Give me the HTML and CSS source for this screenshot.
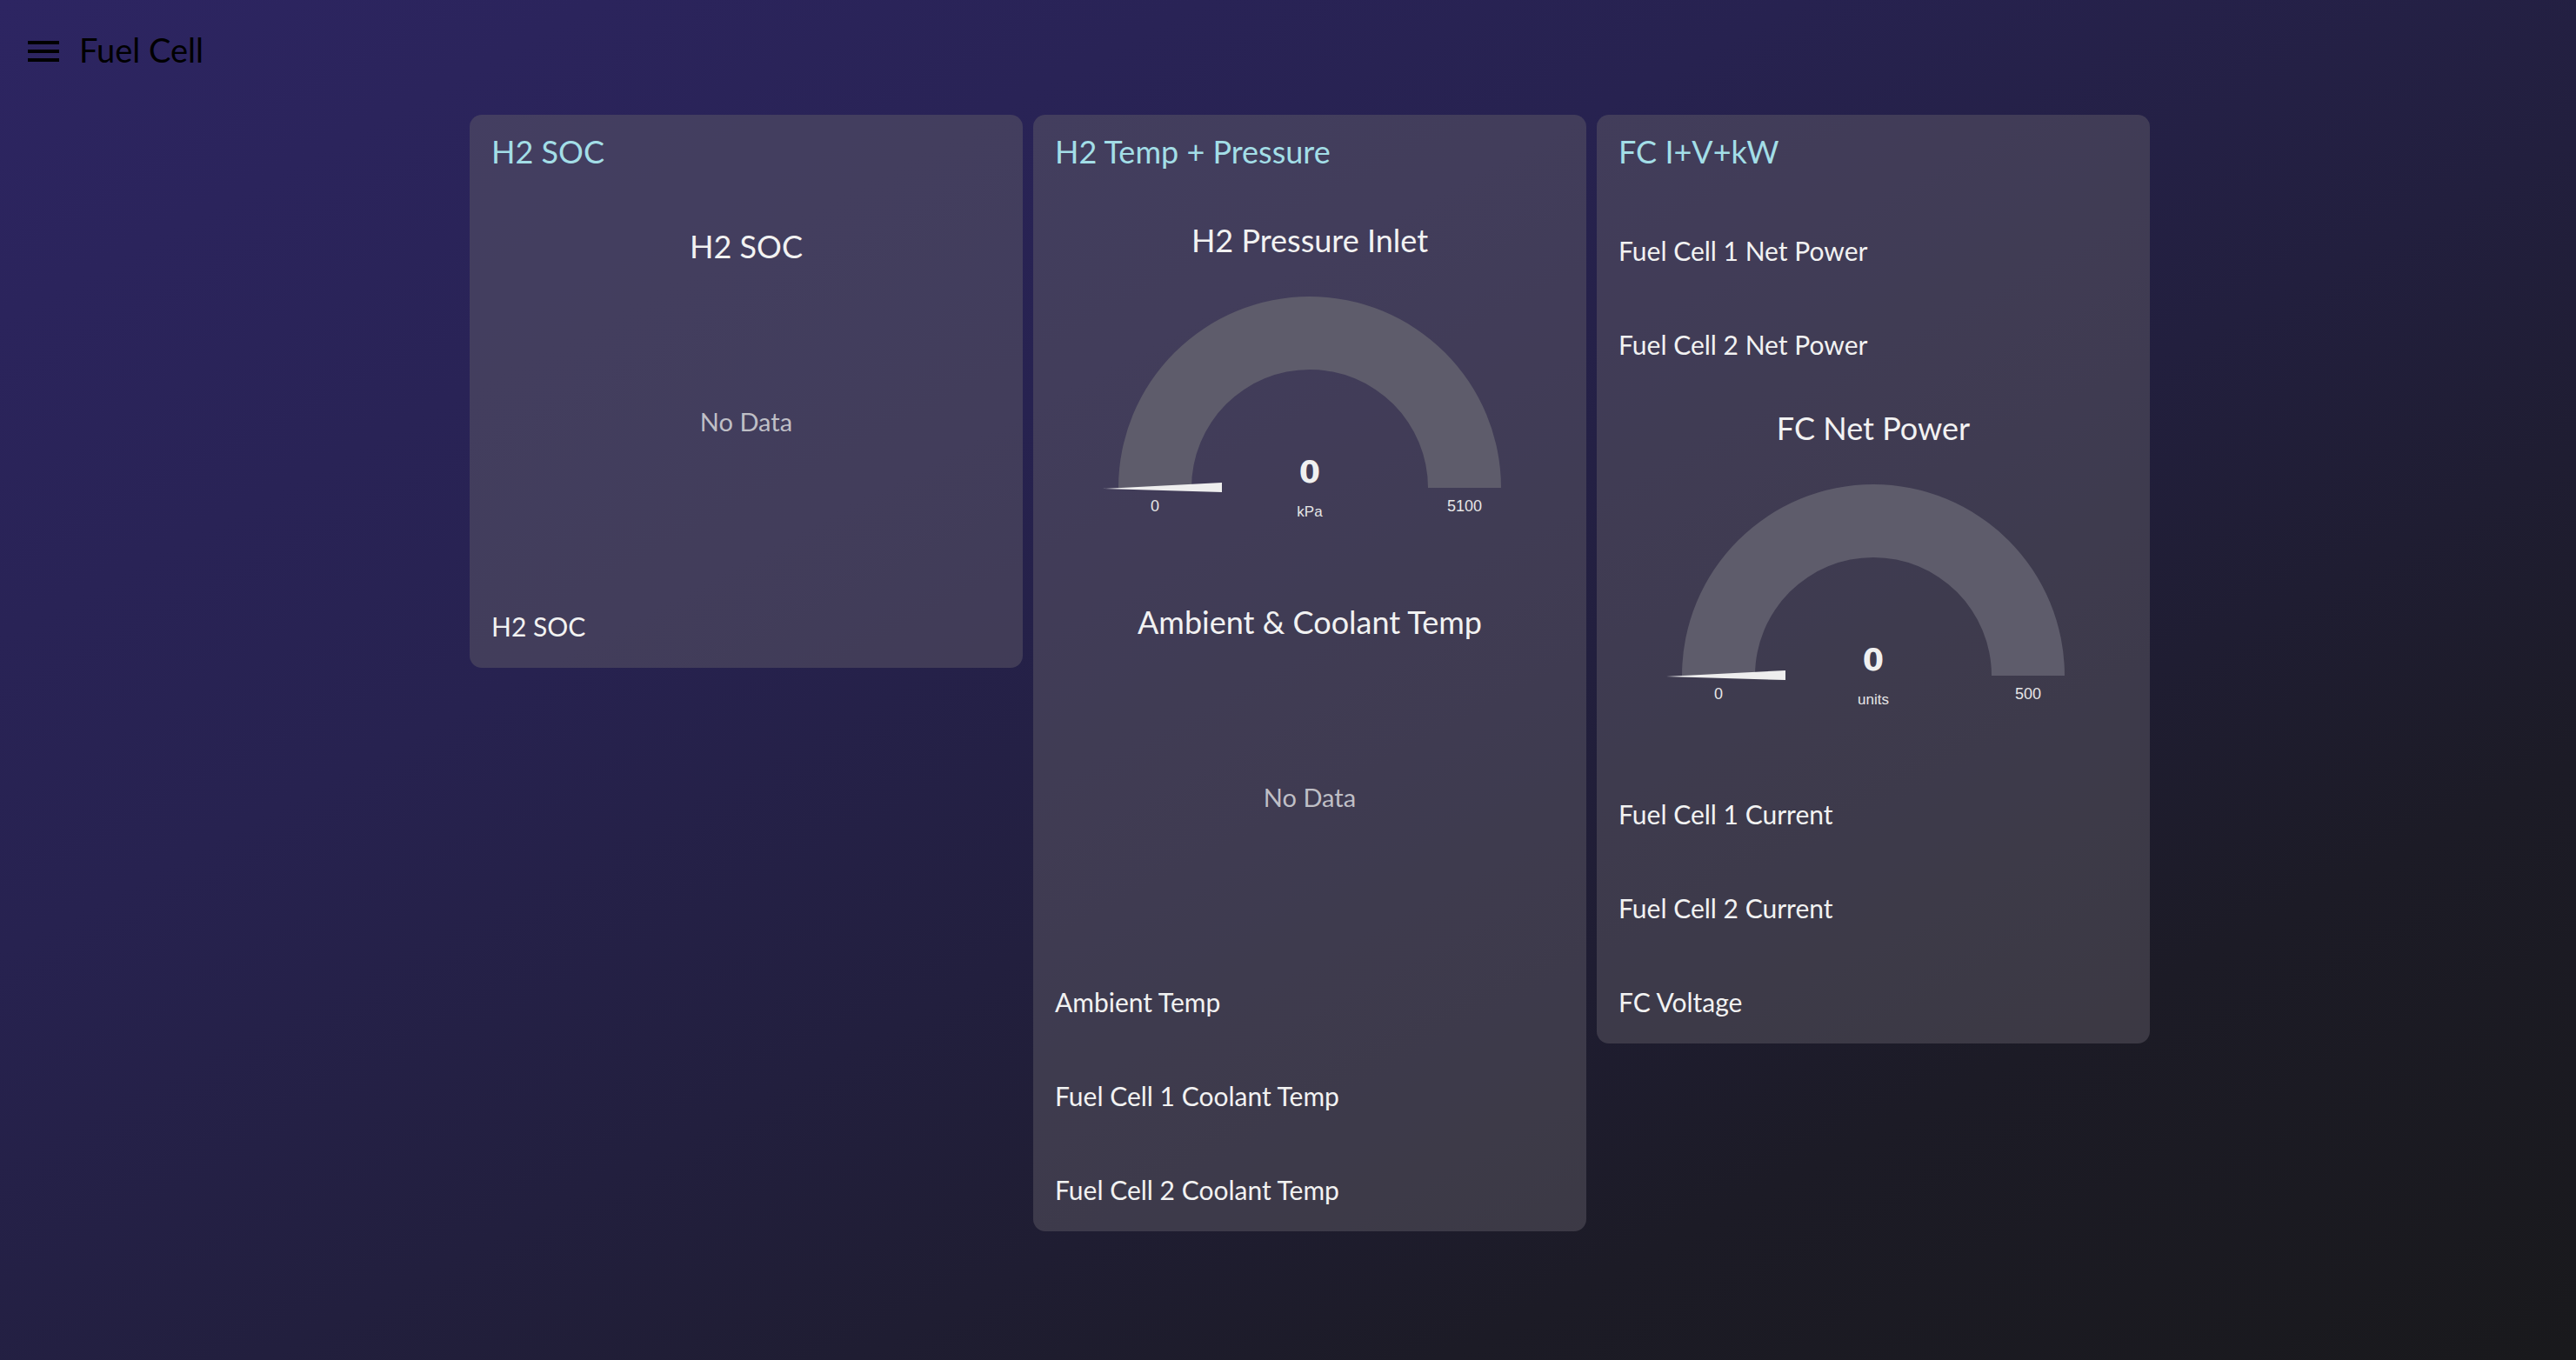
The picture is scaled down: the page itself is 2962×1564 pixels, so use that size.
FILE: index.html
```html
<!DOCTYPE html>
<html lang="en">
<head>
<meta charset="utf-8">
<title>Fuel Cell</title>
<link rel="stylesheet" href="styles.css">
</head>
<body>
<header class="topbar">
  <svg class="menu-icon" width="36" height="24" viewBox="0 0 36 24" aria-hidden="true">
    <rect x="0" y="0" width="36" height="4" fill="#000"/>
    <rect x="0" y="10" width="36" height="4" fill="#000"/>
    <rect x="0" y="20" width="36" height="4" fill="#000"/>
  </svg>
  <span class="app-title">Fuel Cell</span>
</header>

<main class="board">
  <section class="card">
    <h2 class="card-title">H2 SOC</h2>
    <div class="card-body">
      <div class="chart">
        <div class="widget-title">H2 SOC</div>
        <div class="nodata">No Data</div>
      </div>
      <div class="text-row">H2 SOC</div>
    </div>
  </section>

  <section class="card">
    <h2 class="card-title">H2 Temp + Pressure</h2>
    <div class="card-body">
      <div class="gauge">
        <div class="widget-title gauge-title">H2 Pressure Inlet</div>
        <svg class="gauge-svg" width="636" height="360" viewBox="0 0 636 360">
          <path class="arc" d="M 98 261 A 220 220 0 0 1 538 261 L 454 261 A 136 136 0 0 0 182 261 Z"/>
          <path class="needle" d="M 80 262 L 217 255 L 217 266 Z"/>
          <text class="g-value" x="318" y="255">0</text>
          <text class="g-label" x="140" y="288">0</text>
          <text class="g-label" x="496" y="288">5100</text>
          <text class="g-units" x="318" y="294">kPa</text>
        </svg>
      </div>
      <div class="chart">
        <div class="widget-title">Ambient &amp; Coolant Temp</div>
        <div class="nodata">No Data</div>
      </div>
      <div class="text-row">Ambient Temp</div>
      <div class="text-row">Fuel Cell 1 Coolant Temp</div>
      <div class="text-row">Fuel Cell 2 Coolant Temp</div>
    </div>
  </section>

  <section class="card">
    <h2 class="card-title">FC I+V+kW</h2>
    <div class="card-body">
      <div class="text-row">Fuel Cell 1 Net Power</div>
      <div class="text-row">Fuel Cell 2 Net Power</div>
      <div class="gauge">
        <div class="widget-title gauge-title">FC Net Power</div>
        <svg class="gauge-svg" width="636" height="360" viewBox="0 0 636 360">
          <path class="arc" d="M 98 261 A 220 220 0 0 1 538 261 L 454 261 A 136 136 0 0 0 182 261 Z"/>
          <path class="needle" d="M 80 262 L 217 255 L 217 266 Z"/>
          <text class="g-value" x="318" y="255">0</text>
          <text class="g-label" x="140" y="288">0</text>
          <text class="g-label" x="496" y="288">500</text>
          <text class="g-units" x="318" y="294">units</text>
        </svg>
      </div>
      <div class="text-row">Fuel Cell 1 Current</div>
      <div class="text-row">Fuel Cell 2 Current</div>
      <div class="text-row">FC Voltage</div>
    </div>
  </section>
</main>
</body>
</html>
```
FILE: styles.css
```css
* { box-sizing: border-box; }

html, body {
  margin: 0;
  padding: 0;
}

body {
  width: 2962px;
  min-height: 1564px;
  font-family: Lato, "Open Sans", "Noto Sans", sans-serif;
  background: linear-gradient(to bottom right, #2d2562 0%, #272250 35%, #221f3e 55%, #1c1b26 78%, #19191c 100%);
  color: #f0f0f0;
}

.topbar {
  height: 114px;
  display: flex;
  align-items: center;
  padding-left: 32px;
  gap: 23px;
}

.menu-icon {
  display: block;
  margin-top: 4px;
}

.app-title {
  font-size: 38px;
  color: #000;
  line-height: 1;
}

.board {
  display: flex;
  align-items: flex-start;
  gap: 12px;
  padding-top: 18px;
  padding-left: 540px;
}

.card {
  width: 636px;
  border-radius: 14px;
  background: rgba(98, 93, 104, 0.46);
}

.card-title {
  margin: 0;
  height: 84px;
  display: flex;
  align-items: center;
  padding-left: 25px;
  font-size: 36px;
  font-weight: 400;
  color: #a3dee7;
}

.card-body {
  display: flex;
  flex-direction: column;
  gap: 12px;
  padding-top: 24px;
}

.text-row {
  height: 96px;
  display: flex;
  align-items: center;
  padding-left: 25px;
  font-size: 30px;
  color: #f2f2f2;
}

.chart {
  height: 420px;
  display: flex;
  flex-direction: column;
}

.widget-title {
  padding-top: 18px;
  line-height: 50px;
  height: 68px;
  text-align: center;
  font-size: 36px;
  color: #f2f2f2;
}

.nodata {
  flex: 1;
  display: flex;
  align-items: center;
  justify-content: center;
  font-size: 29px;
  color: #bfbfc6;
}

.gauge {
  height: 420px;
  display: flex;
  flex-direction: column;
}

.gauge-title {
  padding-top: 12px;
  line-height: 48px;
  height: 60px;
}

.gauge-svg {
  display: block;
}

.arc { fill: #5e5c6b; }
.needle { fill: #eeeeee; }

.g-value {
  font-family: "DejaVu Sans", "Liberation Sans", sans-serif;
  font-weight: 700;
  font-size: 35px;
  fill: #f0f0f0;
  text-anchor: middle;
}

.g-label {
  font-family: "Liberation Sans", Arial, sans-serif;
  font-size: 18px;
  fill: #e6e6e6;
  text-anchor: middle;
}

.g-units {
  font-family: "Liberation Sans", Arial, sans-serif;
  font-size: 17px;
  fill: #e6e6e6;
  text-anchor: middle;
}
```
